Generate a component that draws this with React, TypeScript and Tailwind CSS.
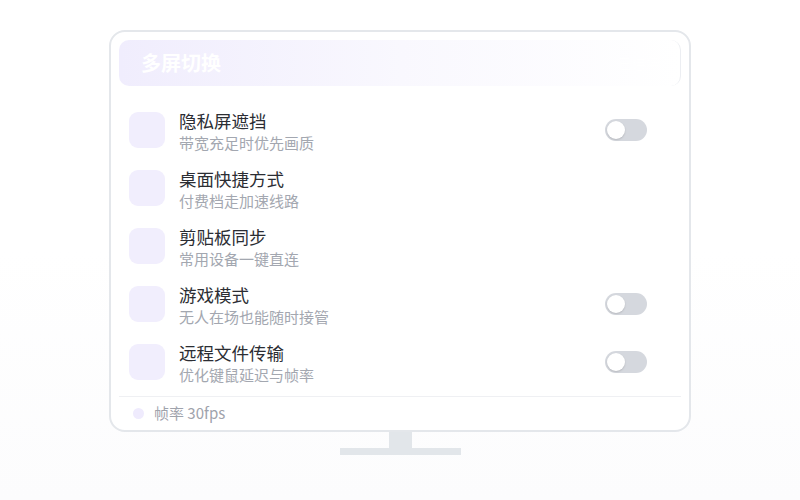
import React from "react";

const items = [
  { title: "隐私屏遮挡", desc: "带宽充足时优先画质", toggle: true },
  { title: "桌面快捷方式", desc: "付费档走加速线路", toggle: false },
  { title: "剪贴板同步", desc: "常用设备一键直连", toggle: false },
  { title: "游戏模式", desc: "无人在场也能随时接管", toggle: true },
  { title: "远程文件传输", desc: "优化键鼠延迟与帧率", toggle: true },
];

const Toggle = () => (
  <div className="w-[42px] h-[22px] rounded-full bg-[#d5d8de] p-[2px] flex items-center">
    <div className="w-[18px] h-[18px] rounded-full bg-white shadow-[0_1px_2px_rgba(0,0,0,0.15)]" />
  </div>
);

export default function App() {
  return (
    <div
      className="w-[800px] h-[500px] bg-gradient-to-b from-white via-white to-[#fcfcfd] pt-[30px] flex flex-col items-center"
      style={{ fontFamily: '"Noto Sans CJK SC", "Noto Sans", sans-serif' }}
    >
      {/* 显示器 */}
      <div className="w-[582px] h-[402px] bg-white border-2 border-[#e4e7eb] rounded-[16px] px-[8px] pt-[8px] flex flex-col">
        <div className="h-[46px] shrink-0 rounded-[10px] bg-gradient-to-r from-[#f0edfd] via-[#f9f8fe] to-white border-r border-[#eceef2] flex items-center justify-between pl-[22px] pr-[20px]">
          <span className="text-[20px] font-bold text-white leading-none">多屏切换</span>
          <span className="text-[14px] text-white leading-none">已连接</span>
        </div>

        <div className="pt-[15px] flex flex-col">
          {items.map((item, i) => (
            <div key={i} className="h-[58px] flex items-center pl-[10px] pr-[34px]">
              <div className="w-[36px] h-[36px] rounded-[9px] bg-[#f1eefd]" />
              <div className="ml-[14px] flex-1 flex flex-col pt-[2px]">
                <div className="text-[17.5px] leading-[22px] text-[#2b2d33]">{item.title}</div>
                <div className="text-[15px] leading-[21px] text-[#a3a7b0]">{item.desc}</div>
              </div>
              {item.toggle && <Toggle />}
            </div>
          ))}
        </div>

        <div className="mt-[5px] border-t border-[#eff0f3] flex-1 flex items-center pl-[14px]">
          <div className="w-[11px] h-[11px] rounded-full bg-[#efebfd]" />
          <span className="ml-[10px] text-[15px] text-[#9fa3ac]">帧率 30fps</span>
        </div>
      </div>

      {/* 支架 */}
      <div className="w-[23px] h-[16px] bg-[#e2e6ea]" />
      <div className="w-[121px] h-[7px] bg-[#e2e6ea]" />
    </div>
  );
}
